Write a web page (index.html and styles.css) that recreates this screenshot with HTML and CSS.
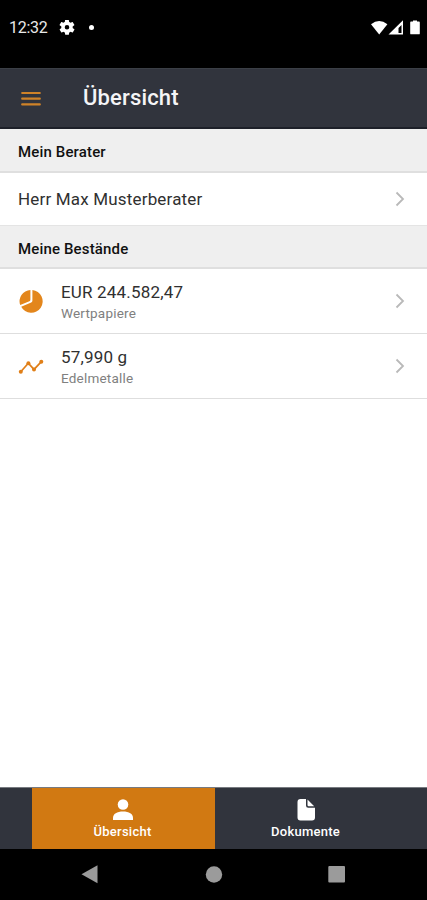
FILE: index.html
```html
<!DOCTYPE html>
<html lang="de">
<head>
<meta charset="utf-8">
<meta name="viewport" content="width=device-width, initial-scale=1">
<title>Übersicht</title>
<link rel="stylesheet" href="styles.css">
</head>
<body>
<div class="status">
  <span class="clock">12:32</span>
  <svg class="gear" width="16" height="16" viewBox="1.500 2.500 21 21"><path fill="#fff" fill-rule="evenodd" d="M19.400 13c0-.3.100-.6.100-1s0-.7-.1-1l2.100-1.600c.2-.2.200-.4.100-.6l-2-3.500c-.1-.2-.4-.3-.6-.2l-2.500 1c-.5-.4-1.100-.7-1.700-1l-.4-2.600c0-.3-.2-.5-.4-.5h-4c-.3 0-.5.200-.5.400l-.4 2.700c-.6.200-1.100.6-1.700 1l-2.500-1c-.2-.1-.5 0-.6.200l-2 3.500c-.1.200-.1.500.1.600L4.600 11c0 .3-.1.600-.1 1s0 .7.100 1l-2.100 1.600c-.2.200-.2.400-.1.600l2 3.500c.1.200.4.300.6.200l2.500-1c.5.400 1.100.7 1.700 1l.4 2.600c0 .3.200.5.500.5h4c.2 0 .4-.2.400-.4l.4-2.700c.6-.2 1.200-.6 1.700-1l2.500 1c.2.100.5 0 .6-.2l2-3.500c.1-.2.100-.5-.1-.6zM12 15a3 3 0 1 1 0-6 3 3 0 0 1 0 6z"/></svg>
  <span class="dot"></span>
  <svg class="signals" width="50" height="16" viewBox="0 0 50 16"><path fill="#fff" d="M1 4.300Q9.200-2.300 17.400 4.300L9.200 14.500z"/><path fill="#fff" fill-rule="evenodd" d="M33 .3V14.600H18.500zM31.500 5L28.500 8v5h3z"/><path fill="#fff" d="M41 1.600h2V.5h4v1.100h2q.8 0 .8.800v11q0 .9-.8.900h-8q-.8 0-.8-.9v-11q0-.8.800-.8z"/></svg>
</div>
<header class="header">
  <svg width="20" height="15" viewBox="0 0 20 15"><path stroke="#cf8228" stroke-width="2.200" stroke-linecap="round" d="M1.200 2h17.600M1.200 7.700h17.600M1.200 13.400h17.600"/></svg>
  <h1>Übersicht</h1>
</header>
<main>
  <h2>Mein Berater</h2>
  <div class="row advisor"><span class="primary">Herr Max Musterberater</span><svg class="chevron" width="10" height="16" viewBox="0 0 10 16"><path d="M1.500 1.500L8 8l-6.500 6.500"/></svg></div>
  <h2 class="assets">Meine Bestände</h2>
  <div class="row">
    <svg class="icon" width="26" height="26" viewBox="0 0 26 26"><path fill="#e3861c" d="M12.400 2V11.700Q12.400 12.700 11.400 13.200L2.200 17A11.200 11.200 0 0 1 12.400 2zM14.400 2A11.400 11.400 0 1 1 3.200 18.700L13.200 14.500Q14.400 14 14.400 12.800z"/></svg>
    <div class="text"><span class="primary">EUR 244.582,47</span><span class="secondary">Wertpapiere</span></div>
    <svg class="chevron" width="10" height="16" viewBox="0 0 10 16"><path d="M1.500 1.500L8 8l-6.500 6.500"/></svg>
  </div>
  <div class="row">
    <svg class="icon" width="26" height="26" viewBox="0 0 26 26"><path fill="none" stroke="#e07f18" stroke-width="1.700" d="M3 18.500L10.300 10.200L16 16.400L23.400 8.600"/><g fill="#e07f18"><circle cx="2.800" cy="18.700" r="2"/><circle cx="10.400" cy="10.200" r="2"/><circle cx="16" cy="16.500" r="2"/><circle cx="23.300" cy="8.700" r="2"/></g></svg>
    <div class="text"><span class="primary">57,990 g</span><span class="secondary">Edelmetalle</span></div>
    <svg class="chevron" width="10" height="16" viewBox="0 0 10 16"><path d="M1.500 1.500L8 8l-6.500 6.500"/></svg>
  </div>
</main>
<nav class="tabs">
  <a class="tab active"><svg width="22" height="24" viewBox="0 0 22 24"><circle cx="11" cy="6.500" r="5.300" fill="#fff"/><path fill="#fff" d="M1 22v-2.200c0-4 4-6.300 10-6.300s10 2.300 10 6.300V22z"/></svg><span>Übersicht</span></a>
  <a class="tab"><svg width="22" height="24" viewBox="0 0 22 24"><path fill="#fff" d="M5.500 1H11v6.500Q11 9.800 13.300 9.800H20V19.500Q20 22.500 17 22.500H5.500Q2.500 22.500 2.500 19.500V4Q2.500 1 5.500 1zM12.500 1.500L19.200 8.300H13.700Q12.500 8.300 12.500 7.100z"/></svg><span>Dokumente</span></a>
</nav>
<div class="system">
  <svg width="427" height="51" viewBox="0 0 427 51" fill="#9b9b9b"><path d="M81.500 25.300L97.500 16.300V34.300z"/><circle cx="214" cy="25.500" r="8.200"/><rect x="328.300" y="17" width="16.700" height="16.500" rx="1"/></svg>
</div>
</body>
</html>
```
FILE: styles.css
```css
* { box-sizing: border-box; }
body {
  margin: 0;
  width: 427px;
  height: 900px;
  display: flex;
  flex-direction: column;
  overflow: hidden;
  background: #fff;
  font-family: Roboto, "Liberation Sans", sans-serif;
}
h1, h2 { margin: 0; font-weight: 500; }
svg { display: block; flex: none; }
.status {
  height: 68px;
  padding: 0 7px 13px 9px;
  display: flex;
  align-items: center;
  background: #000;
  color: #e8e8e8;
}
.clock { width: 50px; padding-top: 1px; font-size: 16px; line-height: 20px; letter-spacing: -0.3px; white-space: nowrap; }
.dot { width: 5px; height: 5px; margin-left: 13.5px; border-radius: 50%; background: #fff; }
.signals { margin-left: auto; }
.header {
  height: 61px;
  padding-left: 21px;
  display: flex;
  align-items: center;
  gap: 42px;
  background: #31343d;
  border-top: 1px solid #3b3f46;
  border-bottom: 2px solid #1d2029;
  color: #f5f5f7;
}
h1 { font-size: 22px; line-height: 28px; letter-spacing: 0.15px; }
main { flex: 1; }
h2 {
  height: 44px;
  padding-left: 18px;
  background: #efefef;
  border-bottom: 2px solid #dfdfdf;
  color: #111;
  font-size: 15px;
  line-height: 47px;
  letter-spacing: 0.15px;
}
.assets { border-top: 1px solid #e4e4e4; }
.row {
  height: 65px;
  padding: 0 22px 0 18px;
  display: flex;
  align-items: center;
  border-bottom: 1px solid #dedede;
}
.advisor { height: 52px; border: 0; }
.icon { margin-left: -0.5px; }
.text { display: flex; flex-direction: column; margin-left: 17.5px; padding-top: 2px; }
.primary { font-size: 17px; line-height: 22px; letter-spacing: 0.18px; color: #303030; }
.secondary { font-size: 13.5px; line-height: 21px; letter-spacing: 0.2px; color: #808080; }
.chevron { margin-left: auto; fill: none; stroke: #b9b9b9; stroke-width: 1.8; }
.tabs {
  height: 62px;
  padding-left: 31.5px;
  display: flex;
  background: #31343d;
  border-top: 1px solid #777a80;
}
.tab {
  width: 183px;
  padding: 10px 1px 0 0;
  display: flex;
  flex-direction: column;
  align-items: center;
  color: #fff;
  font-size: 13px;
  font-weight: 500;
  line-height: 19px;
  letter-spacing: 0.25px;
}
.active { background: #d17912; }
.system { height: 51px; background: #000; }
```
